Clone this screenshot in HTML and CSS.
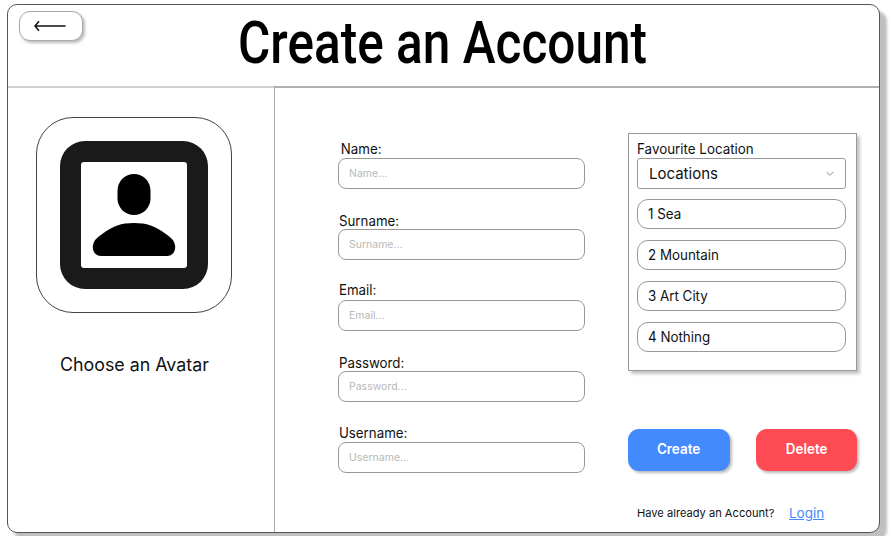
FILE: index.html
```html
<!DOCTYPE html>
<html lang="en">
<head>
<meta charset="utf-8">
<title>Create an Account</title>
<link rel="stylesheet" href="styles.css">
</head>
<body>
<main class="window">
  <header class="header">
    <button class="back" aria-label="Back"><svg width="32" height="12" viewBox="0 0 32 12" fill="none" stroke="#111" stroke-width="1.5"><path d="M1 6H31.5M5 1.2L1 6L5 10.8"/></svg></button>
    <h1 class="title"><span>Create an Account</span></h1>
  </header>
  <div class="content">
    <aside class="side">
      <div class="avatar">
        <svg width="150" height="150" viewBox="0 0 150 150"><path fill="#1a1a1a" fill-rule="evenodd" d="M26 1H124A25 25 0 0 1 149 26V124A25 25 0 0 1 124 149H26A25 25 0 0 1 1 124V26A25 25 0 0 1 26 1ZM25 22Q22 22 22 25V125Q22 128 25 128H125Q128 128 128 125V25Q128 22 125 22Z"/><rect x="58.5" y="34" width="33" height="41" rx="16.5"/><path d="M66 83.500Q75 82.500 84 83.500C94 85 105 91.500 113 99C119 106 116 116 108 116H42C34 116 31 106 37 99C45 91.500 56 85 66 83.500Z"/></svg>
      </div>
      <p class="caption"><span>Choose an Avatar</span></p>
    </aside>
    <section class="main">
      <form class="fields">
        <div class="field f-name"><label for="a">Name:</label><input id="a" placeholder="Name..."></div>
        <div class="field f-surname"><label for="b">Surname:</label><input id="b" placeholder="Surname..."></div>
        <div class="field f-email"><label for="c">Email:</label><input id="c" placeholder="Email..."></div>
        <div class="field f-password"><label for="d">Password:</label><input id="d" placeholder="Password..."></div>
        <div class="field f-username"><label for="e">Username:</label><input id="e" placeholder="Username..."></div>
      </form>
      <div class="right">
        <div class="panel">
          <p class="heading"><span>Favourite Location</span></p>
          <div class="select"><span>Locations</span><svg width="8" height="6" viewBox="0 0 8 6" fill="none" stroke="#8c8c8c"><path d="M.7 1L4 4.300L7.300 1"/></svg></div>
          <div class="option"><span>1 Sea</span></div>
          <div class="option"><span>2 Mountain</span></div>
          <div class="option"><span>3 Art City</span></div>
          <div class="option"><span>4 Nothing</span></div>
        </div>
        <div class="actions"><button class="btn create"><span>Create</span></button><button class="btn delete"><span>Delete</span></button></div>
        <p class="login"><span>Have already an Account?</span><a href="#">Login</a></p>
      </div>
    </section>
  </div>
</main>
</body>
</html>
```
FILE: styles.css
```css
* { box-sizing: border-box; }
body { margin: 0; padding: 4px 0 0 7px; height: 536px; overflow: hidden; background: #fff; color: #111; font-family: Inter, sans-serif; }
p, h1 { margin: 0; }
span, label { display: inline-block; white-space: nowrap; transform-origin: left center; }
.window { width: 873px; height: 529px; border: 1px solid #555; border-radius: 10px; background: #fff; box-shadow: 7px 7px 3px #bfbfbf; display: flex; flex-direction: column; }
.header { height: 81px; flex: none; display: flex; align-items: flex-start; padding: 6px 0 0 11px; }
.back { width: 64px; height: 30px; padding: 0; border: 1px solid #aaa; border-radius: 11px; background: #fff; box-shadow: 2px 2px 3px #bbb; display: flex; align-items: center; justify-content: center; }
.back svg { margin-right: 2px; }
.title { margin-left: 155px; font: 500 59px/64px Roboto, sans-serif; color: #000; }
.title span { transform: scaleX(.84); }
.content { flex: 1; display: flex; min-height: 0; }
.side { width: 266px; flex: none; border-top: 2px solid #cfcfcf; padding: 29px 0 0 28px; }
.avatar { width: 196px; height: 196px; border: 1px solid #444; border-radius: 37px; display: flex; align-items: center; justify-content: center; }
.caption { margin: 40px 0 0 24px; font-size: 18px; line-height: 24px; }
.caption span { transform: scaleX(.99); }
.main { flex: 1; border-top: 2px solid #b0b0b0; border-left: 1px solid #aaa; display: flex; padding: 45px 0 0 63px; }
.fields { width: 247px; flex: none; }
.field { height: 71px; display: flex; flex-direction: column; }
.field label { height: 25px; font-size: 14px; line-height: 20px; padding: 6px 0 0 1px; transform: scaleX(.95); }
.f-name label { padding-left: 3px; }
.f-surname label, .f-password label { padding-top: 7px; }
.f-email label { padding-top: 5px; }
.field input { width: 247px; height: 31px; border: 1px solid #999; border-radius: 8px; padding: 0 10px; font: 10.500px Inter, sans-serif; outline: none; }
input::placeholder { color: #b8b8b8; }
.right { margin-left: 43px; width: 230px; }
.panel { width: 229px; height: 238px; border: 1px solid #999; box-shadow: 3px 3px 3px #c4c4c4; padding: 5px 0 0 8px; }
.heading { height: 19px; font-size: 14px; line-height: 20px; }
.select { width: 209px; height: 31px; border: 1px solid #999; border-radius: 3px; display: flex; align-items: center; justify-content: space-between; padding: 0 11px; font-size: 15px; }
.option { width: 209px; height: 30px; margin-top: 11px; border: 1px solid #999; border-radius: 11px; padding-left: 10px; font-size: 14px; line-height: 28px; }
.select + .option { margin-top: 10px; }
.option span, .heading span { transform: scaleX(.955); }
.actions { display: flex; gap: 26px; margin-top: 58px; }
.btn { width: 101.500px; height: 42px; border: 0; border-radius: 11px; color: #fff; font: 600 14px/40px Inter, sans-serif; box-shadow: 2px 2px 3px #bbb; padding: 0 0 2px; }
.btn span { transform: scaleX(.96); transform-origin: center; }
.create { background: #448aff; }
.delete { background: #ff4b54; }
.login { display: flex; align-items: center; margin: 32px 0 0 9px; height: 20px; font-size: 11px; }
.login span { transform: scaleX(1.01); }
.login a { margin-left: 16px; color: #448aff; font-size: 13.500px; }
```
